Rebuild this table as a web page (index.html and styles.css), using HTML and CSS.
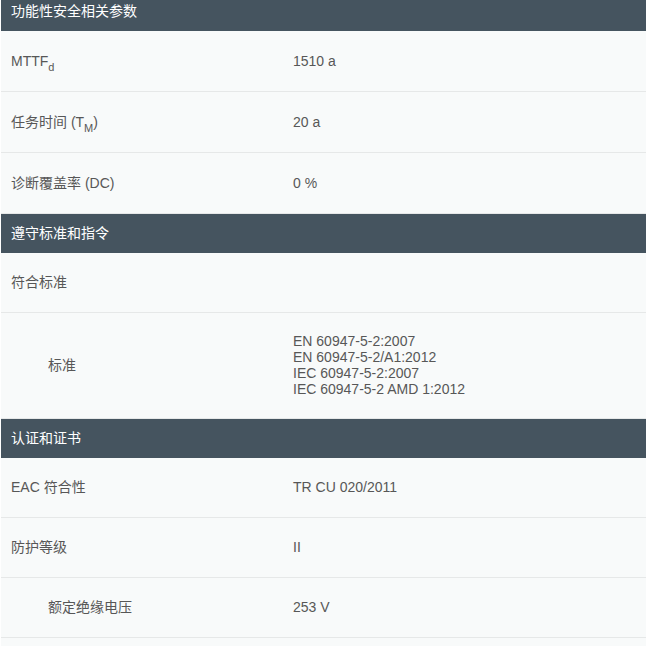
FILE: index.html
```html
<!DOCTYPE html>
<html lang="zh-CN">
<head>
  <meta charset="UTF-8">
  <title>技术参数</title>
  <link rel="stylesheet" href="styles.css">
</head>
<body>
  <div class="specs">
    <div class="group">功能性安全相关参数</div>
    <div class="section tall">
      <div class="row">
        <div class="label">MTTF<sub>d</sub></div>
        <div class="value">1510 a</div>
      </div>
      <div class="row">
        <div class="label">任务时间 (T<sub>M</sub>)</div>
        <div class="value">20 a</div>
      </div>
      <div class="row">
        <div class="label">诊断覆盖率 (DC)</div>
        <div class="value">0 %</div>
      </div>
    </div>

    <div class="group">遵守标准和指令</div>
    <div class="section">
      <div class="row">
        <div class="label">符合标准</div>
        <div class="value"></div>
      </div>
      <div class="row">
        <div class="label sub">标准</div>
        <div class="value list">
          <span>EN 60947-5-2:2007</span>
          <span>EN 60947-5-2/A1:2012</span>
          <span>IEC 60947-5-2:2007</span>
          <span>IEC 60947-5-2 AMD 1:2012</span>
        </div>
      </div>
    </div>

    <div class="group">认证和证书</div>
    <div class="section">
      <div class="row">
        <div class="label">EAC 符合性</div>
        <div class="value">TR CU 020/2011</div>
      </div>
      <div class="row">
        <div class="label">防护等级</div>
        <div class="value">II</div>
      </div>
      <div class="row">
        <div class="label sub">额定绝缘电压</div>
        <div class="value">253 V</div>
      </div>
      <div class="row">
        <div class="label"></div>
        <div class="value"></div>
      </div>
    </div>
  </div>
</body>
</html>
```

FILE: styles.css
```css
body {
  margin: 0;
  background: #fff;
  font-family: "Liberation Sans", "Noto Sans CJK SC", sans-serif;
  font-size: 14px;
  color: #575757;
  overflow: hidden;
}
.specs {
  margin-top: -8px;
  margin-left: 1px;
}
.group {
  background: #45545f;
  color: #fff;
  line-height: 17px;
  padding: 11px 10px;
}
.row {
  display: grid;
  grid-template-columns: 292px 1fr;
  align-items: center;
  background: #f8fafa;
  border-bottom: 1px solid #e6e8e8;
}
.label {
  padding: 21px 10px;
  line-height: 17px;
}
.tall .label {
  padding: 22px 10px 21px;
}
.label.sub {
  padding-left: 47px;
}
.value {
  padding-right: 10px;
  line-height: 17px;
}
.list {
  display: flex;
  flex-direction: column;
  line-height: 16px;
  padding-top: 20px;
  padding-bottom: 21px;
}
sub {
  font-size: 11px;
  line-height: 0;
  vertical-align: -5px;
}
```
